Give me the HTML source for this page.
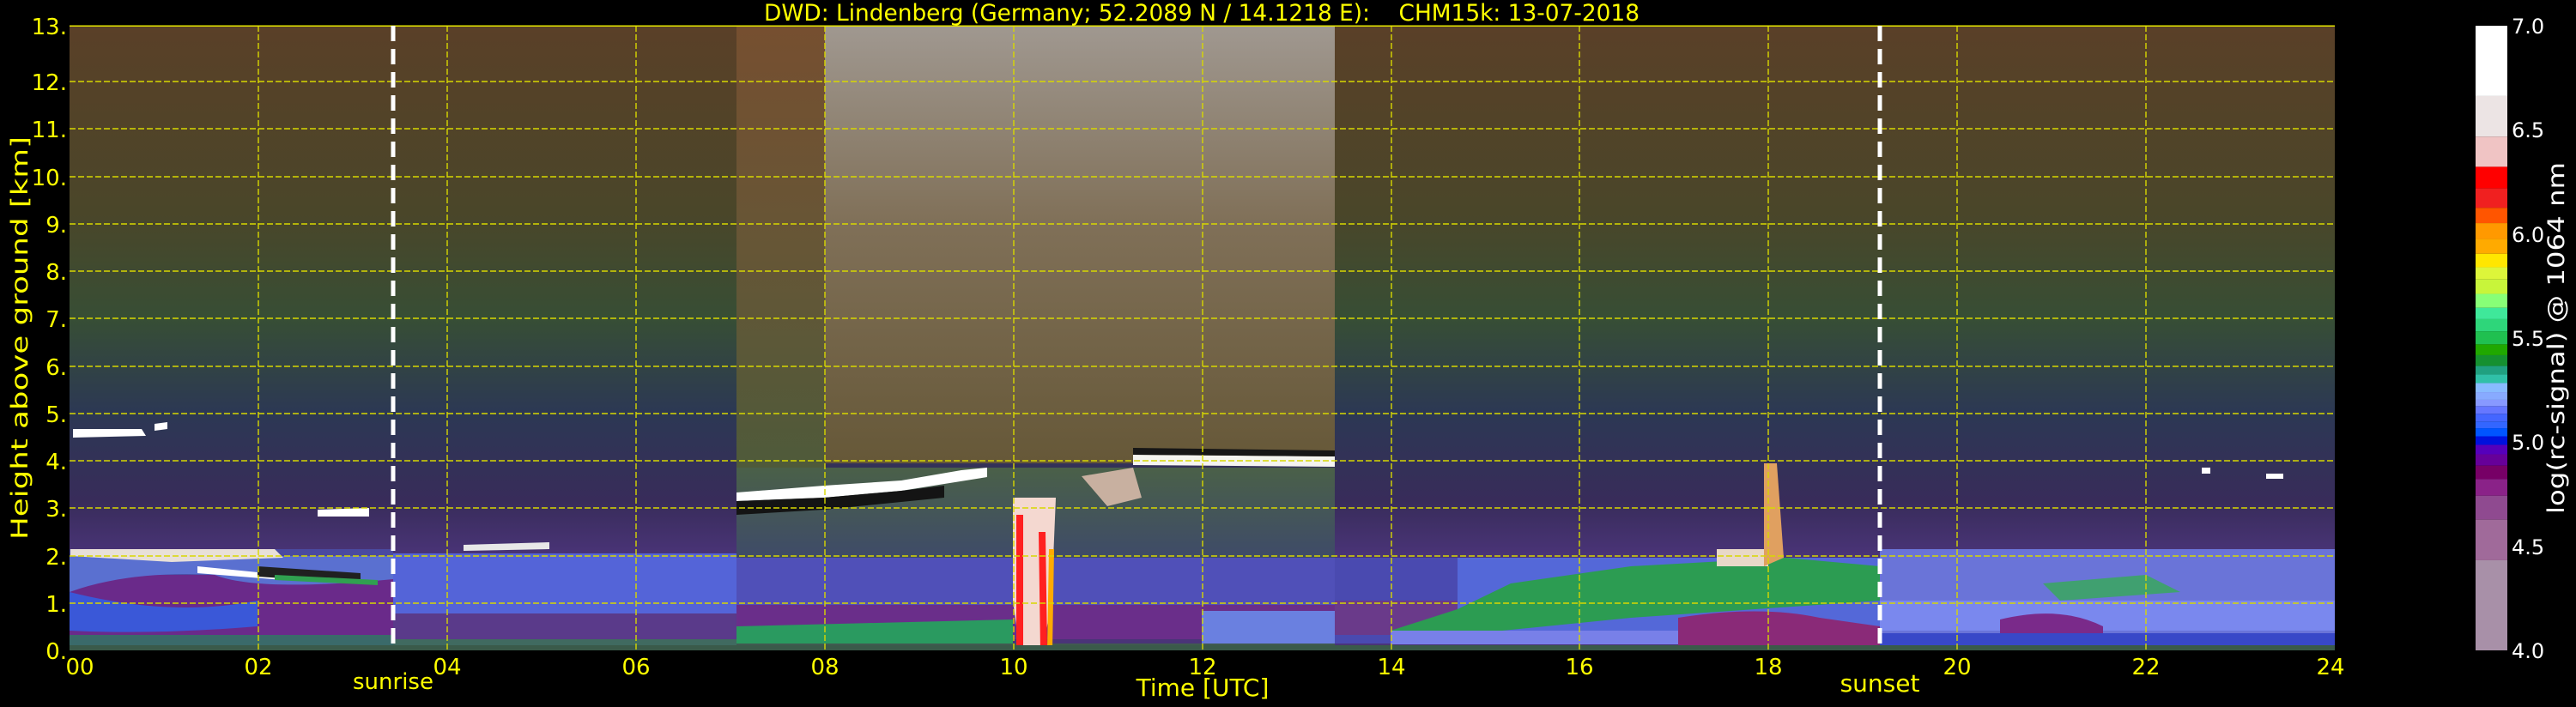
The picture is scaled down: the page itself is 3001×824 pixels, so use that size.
<!DOCTYPE html>
<html><head><meta charset="utf-8"><style>
html,body{margin:0;padding:0;background:#000;}
svg{display:block}
text{font-family:"DejaVu Sans","Liberation Sans",sans-serif;}
</style></head><body>
<svg width="3001" height="824" viewBox="0 0 3001 824" xmlns="http://www.w3.org/2000/svg">
<defs>
<linearGradient id="bg" x1="0" y1="0" x2="0" y2="1" gradientUnits="objectBoundingBox">
<stop offset="0" stop-color="#5a4028"/>
<stop offset="0.3" stop-color="#4a4629"/>
<stop offset="0.47" stop-color="#374e35"/>
<stop offset="0.62" stop-color="#2c3854"/>
<stop offset="0.76" stop-color="#382c5a"/>
<stop offset="0.85" stop-color="#4a3478"/>
<stop offset="1" stop-color="#4a3478"/>
</linearGradient>
<linearGradient id="mid" x1="0" y1="0" x2="0" y2="1">
<stop offset="0" stop-color="#a09890"/>
<stop offset="0.45" stop-color="#807058"/>
<stop offset="1" stop-color="#665838"/>
</linearGradient>
<linearGradient id="mid2" x1="0" y1="0" x2="0" y2="1">
<stop offset="0" stop-color="#764f30"/>
<stop offset="0.5" stop-color="#665636"/>
<stop offset="1" stop-color="#4e5a3a"/>
</linearGradient>
<linearGradient id="low" x1="0" y1="0" x2="0" y2="1">
<stop offset="0" stop-color="#4a6048"/>
<stop offset="1" stop-color="#3e4a6a"/>
</linearGradient>
</defs>

<rect x="81" y="30" width="2639" height="728" fill="url(#bg)"/>
<rect x="858" y="30" width="103" height="520" fill="url(#mid2)"/>
<rect x="961" y="30" width="594" height="510" fill="url(#mid)"/>
<rect x="858" y="545" width="697" height="110" fill="url(#low)"/>

<rect x="81" y="640" width="377" height="40" fill="#4a4aa0"/>
<rect x="81" y="670" width="377" height="80" fill="#6a2a8a"/>
<path d="M81 690 Q200 720 300 700 L300 730 Q180 740 81 735Z" fill="#3a58d8"/>
<rect x="81" y="740" width="377" height="18" fill="#3a6a6a"/>
<path d="M81 648 L458 648 L458 675 Q300 690 250 670 Q150 665 81 690Z" fill="#5a70d0"/>
<path d="M85 500 L165 500 L170 508 L85 510Z" fill="#fff"/>
<path d="M180 494 L195 492 L195 500 L180 502Z" fill="#fff"/>
<path d="M82 640 L320 640 L330 650 L200 655 L82 648Z" fill="#e8e0d8"/>
<path d="M230 660 L330 670 L330 676 L230 668Z" fill="#fff"/>
<path d="M370 594 L430 592 L430 602 L370 602Z" fill="#fff"/>
<path d="M300 660 L420 668 L420 680 L300 672Z" fill="#202020"/>
<path d="M320 670 L440 676 L440 682 L320 676Z" fill="#30a050"/>

<rect x="458" y="645" width="400" height="95" fill="#5464d8"/>
<rect x="458" y="715" width="400" height="30" fill="#5a3a8a"/>
<rect x="458" y="745" width="400" height="13" fill="#406a60"/>
<path d="M540 635 L640 632 L640 640 L540 642Z" fill="#e8e8e8"/>

<rect x="858" y="650" width="697" height="60" fill="#5050b8"/>
<rect x="858" y="705" width="697" height="40" fill="#6a2e8a"/>
<path d="M858 730 L1180 722 L1180 752 L858 752Z" fill="#2a9a60"/>
<rect x="1400" y="712" width="155" height="40" fill="#6a80e0"/>
<rect x="858" y="750" width="697" height="8" fill="#405a50"/>
<path d="M858 574 L960 566 L1050 560 L1120 548 L1150 545 L1150 556 L1050 572 L960 580 L858 584Z" fill="#fff"/>
<path d="M858 584 L960 580 L1050 572 L1100 566 L1100 580 L960 594 L858 600Z" fill="#141414"/>
<path d="M1320 530 L1555 532 L1555 544 L1320 542Z" fill="#f4f4f0"/>
<path d="M1320 522 L1555 525 L1555 532 L1320 530Z" fill="#161616"/>
<path d="M1260 555 L1320 545 L1330 580 L1290 590Z" fill="#c8b0a0"/>
<path d="M1180 580 L1230 580 L1225 700 L1215 758 L1188 758 L1180 700Z" fill="#f4d8d0"/>
<path d="M1184 600 L1192 600 L1192 758 L1184 758Z M1210 620 L1218 620 L1220 758 L1212 758Z" fill="#ff2020"/>
<path d="M1222 640 L1228 640 L1226 758 L1220 758Z" fill="#ffaa00"/>

<rect x="1555" y="650" width="143" height="100" fill="#4a4ab0"/>
<rect x="1555" y="700" width="143" height="40" fill="#6a3a8a"/>
<rect x="1698" y="650" width="492" height="100" fill="#5468d8"/>
<path d="M1620 735 L1698 710 L1760 680 L1900 660 L2080 650 L2190 660 L2190 700 L1900 720 L1700 740Z" fill="#2c9c52"/>
<rect x="1620" y="735" width="570" height="16" fill="#7880e8"/>
<path d="M1955 720 Q2050 705 2120 720 L2190 730 L2190 752 L1955 752Z" fill="#8a2a78"/>
<path d="M2000 640 L2060 640 L2060 660 L2000 660Z" fill="#e8d8c8"/>
<path d="M2055 540 L2070 540 L2078 650 L2055 660Z" fill="#e0a060"/>
<rect x="2190" y="640" width="530" height="112" fill="#6a74d8"/>
<rect x="2190" y="700" width="530" height="35" fill="#7a88ee"/>
<path d="M2330 722 Q2400 705 2450 730 L2450 745 L2330 745Z" fill="#7a2a8a"/>
<path d="M2380 680 L2500 670 L2540 690 L2400 700Z" fill="#40a070"/>
<rect x="2190" y="738" width="530" height="14" fill="#3848c8"/>
<rect x="81" y="752" width="2639" height="6" fill="#3a5a4a"/>
<path d="M2565 545 L2575 545 L2575 552 L2565 552Z M2640 552 L2660 552 L2660 558 L2640 558Z" fill="#fff"/>

<g stroke="#d8d800" stroke-width="1.4" stroke-dasharray="7,3" fill="none">
<path d="M81 95H2720M81 150H2720M81 206H2720M81 261H2720M81 316H2720M81 371H2720M81 427H2720M81 482H2720M81 537H2720M81 592H2720M81 648H2720M81 703H2720"/>
<path d="M301 30V758M521 30V758M741 30V758M961 30V758M1181 30V758M1401 30V758M1621 30V758M1840 30V758M2060 30V758M2280 30V758M2500 30V758"/>
</g>
<rect x="81" y="29.5" width="2639" height="1.5" fill="#e6e600"/>
<g stroke="#fff" stroke-width="5" stroke-dasharray="18,9">
<path d="M458 30V758M2190 30V758"/>
</g>

<g fill="#ffff00" font-size="26" text-anchor="end">
<text x="78" y="40">13.</text><text x="78" y="105">12.</text><text x="78" y="160">11.</text>
<text x="78" y="216">10.</text><text x="78" y="271">9.</text><text x="78" y="326">8.</text>
<text x="78" y="381">7.</text><text x="78" y="437">6.</text><text x="78" y="492">5.</text>
<text x="78" y="547">4.</text><text x="78" y="602">3.</text><text x="78" y="658">2.</text>
<text x="78" y="713">1.</text><text x="78" y="768">0.</text>
</g>
<text transform="translate(32,394) rotate(-90)" fill="#ffff00" font-size="27" text-anchor="middle" textLength="470" lengthAdjust="spacingAndGlyphs" font-family="Liberation Sans">Height above ground [km]</text>
<g fill="#ffff00" font-size="26" text-anchor="middle">
<text x="93" y="786">00</text><text x="301" y="786">02</text><text x="521" y="786">04</text>
<text x="741" y="786">06</text><text x="961" y="786">08</text><text x="1181" y="786">10</text>
<text x="1401" y="786">12</text><text x="1621" y="786">14</text><text x="1840" y="786">16</text>
<text x="2060" y="786">18</text><text x="2280" y="786">20</text><text x="2500" y="786">22</text>
<text x="2715" y="786">24</text>
<text x="458" y="803">sunrise</text>
<text x="2190" y="806" font-family="Liberation Sans" font-size="28">sunset</text>
<text x="1401" y="811" font-family="Liberation Sans" font-size="28">Time [UTC]</text>
</g>
<text x="1400" y="24" fill="#ffff00" font-size="27" text-anchor="middle" font-family="Liberation Sans" textLength="1020" lengthAdjust="spacingAndGlyphs" xml:space="preserve">DWD: Lindenberg (Germany; 52.2089 N / 14.1218 E):    CHM15k: 13-07-2018</text>

<svg x="2884" y="30" width="37" height="728" viewBox="0 57 10 1386" preserveAspectRatio="none">
<rect x="0" y="57" width="10" height="156" fill="#ffffff"/>
<rect x="0" y="213" width="10" height="90" fill="#ece4e4"/>
<rect x="0" y="303" width="10" height="67" fill="#f0c4c4"/>
<rect x="0" y="370" width="10" height="48" fill="#ff0000"/>
<rect x="0" y="418" width="10" height="43" fill="#f02020"/>
<rect x="0" y="461" width="10" height="34" fill="#ff5500"/>
<rect x="0" y="495" width="10" height="35" fill="#ff9900"/>
<rect x="0" y="530" width="10" height="33" fill="#ffaa00"/>
<rect x="0" y="563" width="10" height="30" fill="#ffe600"/>
<rect x="0" y="593" width="10" height="27" fill="#ddf53a"/>
<rect x="0" y="620" width="10" height="32" fill="#c8f53a"/>
<rect x="0" y="652" width="10" height="31" fill="#88ff77"/>
<rect x="0" y="683" width="10" height="25" fill="#3fe89a"/>
<rect x="0" y="708" width="10" height="27" fill="#2ed67a"/>
<rect x="0" y="735" width="10" height="29" fill="#20c050"/>
<rect x="0" y="764" width="10" height="24" fill="#20a800"/>
<rect x="0" y="788" width="10" height="24" fill="#159030"/>
<rect x="0" y="812" width="10" height="19" fill="#20a080"/>
<rect x="0" y="831" width="10" height="19" fill="#30c0a8"/>
<rect x="0" y="850" width="10" height="20" fill="#88bbff"/>
<rect x="0" y="870" width="10" height="17" fill="#88aaff"/>
<rect x="0" y="887" width="10" height="14" fill="#8899ff"/>
<rect x="0" y="901" width="10" height="17" fill="#6677ff"/>
<rect x="0" y="918" width="10" height="17" fill="#4466ff"/>
<rect x="0" y="935" width="10" height="15" fill="#3366ff"/>
<rect x="0" y="950" width="10" height="18" fill="#0055ff"/>
<rect x="0" y="968" width="10" height="19" fill="#0011dd"/>
<rect x="0" y="987" width="10" height="21" fill="#5500bb"/>
<rect x="0" y="1008" width="10" height="25" fill="#660099"/>
<rect x="0" y="1033" width="10" height="30" fill="#770066"/>
<rect x="0" y="1063" width="10" height="37" fill="#8a2288"/>
<rect x="0" y="1100" width="10" height="53" fill="#8f4a90"/>
<rect x="0" y="1153" width="10" height="90" fill="#a06a9a"/>
<rect x="0" y="1243" width="10" height="200" fill="#a890a8"/>
</svg>
<g fill="#ffffff" font-size="24">
<text x="2926" y="39">7.0</text><text x="2926" y="160">6.5</text><text x="2926" y="282">6.0</text>
<text x="2926" y="403">5.5</text><text x="2926" y="524">5.0</text><text x="2926" y="646">4.5</text>
<text x="2926" y="767">4.0</text>
</g>
<text transform="translate(2987,394) rotate(-90)" fill="#ffffff" font-size="27" text-anchor="middle" font-family="Liberation Sans" textLength="410" lengthAdjust="spacingAndGlyphs">log(rc-signal) @ 1064 nm</text>
</svg>
</body></html>
